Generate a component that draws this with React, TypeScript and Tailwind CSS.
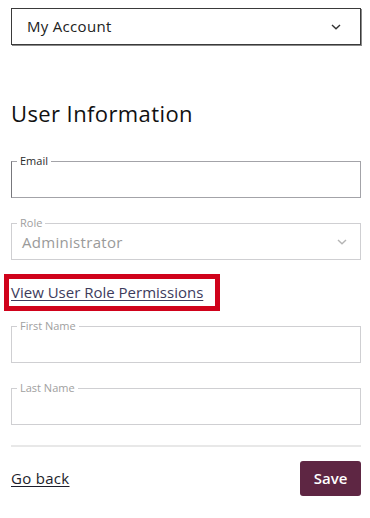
import React from "react";

const font = { fontFamily: '"Open Sans", "Liberation Sans", sans-serif' };

function Chevron({ className }: { className?: string }) {
  return (
    <svg width="12" height="8" viewBox="0 0 12 8" className={className} fill="none">
      <polyline points="2,2 6,5.8 10,2" stroke="currentColor" strokeWidth="1.4" />
    </svg>
  );
}

function Field({
  label,
  value,
  dark,
  select,
}: {
  label: string;
  value?: string;
  dark?: boolean;
  select?: boolean;
}) {
  return (
    <div
      className={`relative h-[37px] border flex items-center justify-between pl-[10px] pr-[12px] ${
        dark ? "border-[#a3a3a8] border-l-[#77777c]" : "border-[#cfcfd2]"
      }`}
    >
      <span
        className={`absolute -top-[8px] left-[5px] bg-white px-[3px] text-[11px] leading-[14px] ${
          dark ? "text-[#2a2a2a]" : "text-[#a0a0a0]"
        }`}
      >
        {label}
      </span>
      <span className="text-[15px] text-[#9a9a9a] pt-[1px] tracking-[0.3px]">{value}</span>
      {select && <Chevron className="text-[#b5b5b5]" />}
    </div>
  );
}

export default function App() {
  return (
    <div className="bg-white min-h-[518px] pl-[11px] pr-[9px] pt-[8px]" style={font}>
      <div className="h-[37px] border border-[#3a3a3a] shadow-[1px_1px_0_#8a8a8a] flex items-center justify-between pl-[15px] pr-[18px]">
        <span className="text-[15px] text-[#222] tracking-[0.3px]">My Account</span>
        <Chevron className="text-[#333]" />
      </div>

      <h2 className="mt-[55px] text-[22px] leading-[26px] text-[#111] tracking-[0.4px]">User Information</h2>

      <div className="mt-[35px]">
        <Field label="Email" dark />
      </div>

      <div className="mt-[25px]">
        <Field label="Role" value="Administrator" select />
      </div>

      <div className="mt-[14px] -ml-[7px] w-[216px] h-[37px] border-[5px] border-[#d0021b] flex items-center pl-[2px]">
        <a href="#" className="text-[15px] text-[#3d3b5c] underline underline-offset-2 decoration-1">
          View User Role Permissions
        </a>
      </div>

      <div className="mt-[15px]">
        <Field label="First Name" />
      </div>

      <div className="mt-[25px]">
        <Field label="Last Name" />
      </div>

      <div className="mt-[20px] h-[2px] bg-[#e8e8e8]" />

      <div className="mt-[14px] flex items-center justify-between">
        <a href="#" className="text-[15px] text-[#1d1d2b] underline underline-offset-2 decoration-1 tracking-[0.3px]">
          Go back
        </a>
        <button className="w-[61px] h-[35px] rounded-[3px] bg-[#5e2643] text-white text-[15px] font-semibold">
          Save
        </button>
      </div>
    </div>
  );
}
